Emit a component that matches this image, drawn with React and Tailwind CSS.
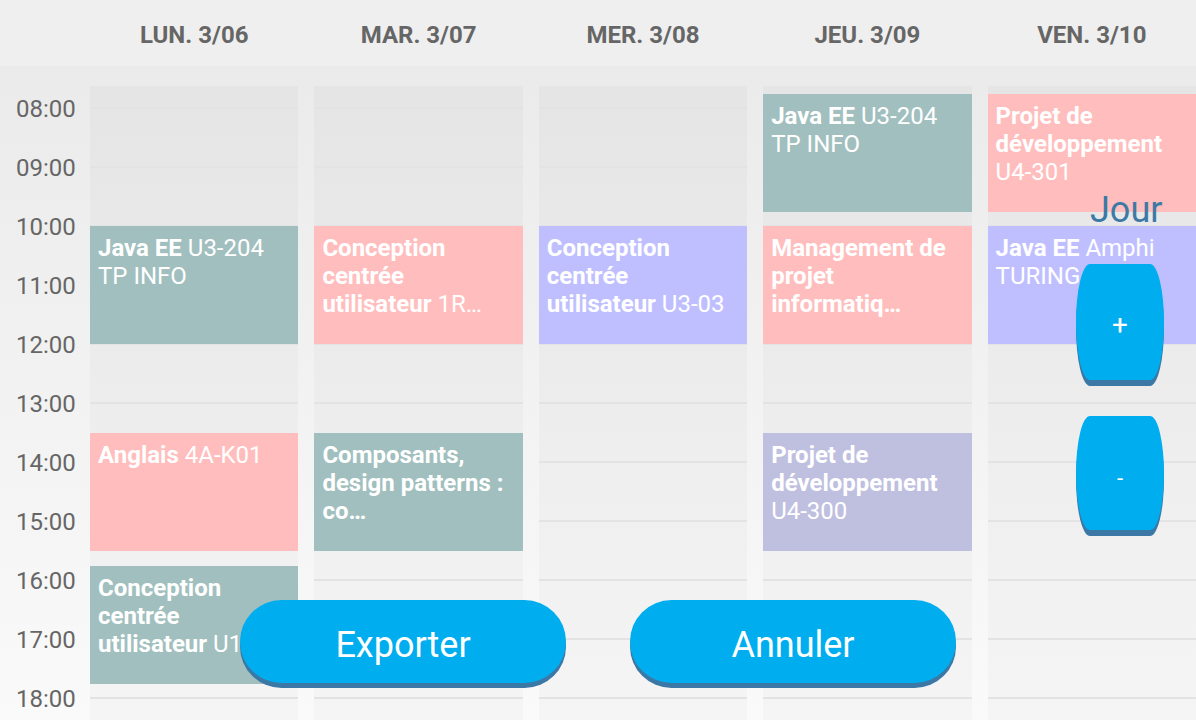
import React from 'react';

const days = ['LUN. 3/06', 'MAR. 3/07', 'MER. 3/08', 'JEU. 3/09', 'VEN. 3/10'];
const hours = ['08:00', '09:00', '10:00', '11:00', '12:00', '13:00', '14:00', '15:00', '16:00', '17:00', '18:00'];

// top = px from column top (column starts 86px down the page), 59px per hour
const events = [
  [
    { top: 140, bg: 'bg-[#a1bfbe]', lines: [[['Java EE', true], [' U3-204', false]], [['TP INFO', false]]] },
    { top: 347, bg: 'bg-[#ffbdbd]', lines: [[['Anglais', true], [' 4A-K01', false]]] },
    { top: 480, bg: 'bg-[#a1bfbe]', lines: [[['Conception', true]], [['centrée', true]], [['utilisateur', true], [' U1-204', false]]] },
  ],
  [
    { top: 140, bg: 'bg-[#ffbdbd]', lines: [[['Conception', true]], [['centrée', true]], [['utilisateur', true], [' 1R…', false]]] },
    { top: 347, bg: 'bg-[#a1bfbe]', lines: [[['Composants,', true]], [['design patterns :', true]], [['co…', true]]] },
  ],
  [
    { top: 140, bg: 'bg-[#bfbfff]', lines: [[['Conception', true]], [['centrée', true]], [['utilisateur', true], [' U3-03', false]]] },
  ],
  [
    { top: 8, bg: 'bg-[#a1bfbe]', lines: [[['Java EE', true], [' U3-204', false]], [['TP INFO', false]]] },
    { top: 140, bg: 'bg-[#ffbdbd]', lines: [[['Management de', true]], [['projet', true]], [['informatiq…', true]]] },
    { top: 347, bg: 'bg-[#bfbfdf]', lines: [[['Projet de', true]], [['développement', true]], [['U4-300', false]]] },
  ],
  [
    { top: 8, bg: 'bg-[#ffbdbd]', lines: [[['Projet de', true]], [['développement', true]], [['U4-301', false]]] },
    { top: 140, bg: 'bg-[#bfbfff]', lines: [[['Java EE', true], [' Amphi', false]], [['TURING', false]]] },
  ],
];

function Event({ ev }) {
  return (
    <div className={`absolute left-0 right-0 h-[118px] overflow-hidden px-[8px] pt-[8px] text-[24px] leading-[28px] text-white ${ev.bg}`}
      style={{ top: ev.top }}>
      {ev.lines.map((line, i) => (
        <div key={i} className="whitespace-nowrap">
          {line.map(([t, b], j) => (
            <span key={j} className={b ? 'font-bold' : 'font-normal'}>{t}</span>
          ))}
        </div>
      ))}
    </div>
  );
}

export default function App() {
  return (
    <div className="relative w-[1196px] h-[720px] overflow-hidden bg-gradient-to-b from-[#e9e9e9] to-[#fafafa]"
      style={{ fontFamily: 'Roboto, "Noto Sans", sans-serif' }}>
      {/* header */}
      <div className="flex h-[66px] bg-[#efefef]">
        <div className="w-[90px] shrink-0" />
        <div className="grid w-[1106px] grid-cols-5 gap-4">
          {days.map(d => (
            <div key={d} className="flex items-center justify-center pt-[4px] text-[24px] font-bold text-[#666666]">{d}</div>
          ))}
        </div>
      </div>

      {/* body */}
      <div className="flex h-[654px]">
        <div className="flex w-[90px] shrink-0 flex-col pt-[13px]">
          {hours.map(h => (
            <div key={h} className="flex h-[59px] shrink-0 items-center pl-[16px] text-[24px] text-[#666666]">{h}</div>
          ))}
        </div>
        <div className="grid w-[1106px] grid-cols-5 gap-4 pt-[20px]">
          {events.map((col, i) => (
            <div key={i} className="relative h-[634px] bg-gradient-to-b from-[#e5e5e5] to-[#f5f5f5]">
              <div className="flex flex-col pt-[21px]">
                {hours.map(h => (
                  <div key={h} className="h-[59px] shrink-0 border-t-2 border-[#e3e3e3]" />
                ))}
              </div>
              {col.map((ev, j) => <Event key={j} ev={ev} />)}
            </div>
          ))}
        </div>
      </div>

      {/* overlays */}
      <div className="absolute left-[1090px] top-[188px] text-[36px] leading-[44px] text-[#3c7aa6]">Jour</div>
      <button className="absolute left-[1076px] top-[264px] flex h-[116px] w-[88px] items-center justify-center rounded-[14px/50%] bg-[#00aeef] pt-[6px] text-[28px] text-white shadow-[0_6px_0_#3b78a6]">+</button>
      <button className="absolute left-[1076px] top-[416px] flex h-[114px] w-[88px] items-center justify-center rounded-[14px/50%] bg-[#00aeef] pt-[10px] text-[22px] text-white shadow-[0_6px_0_#3b78a6]">-</button>

      <button className="absolute left-[240px] top-[600px] flex h-[83px] w-[326px] items-center justify-center rounded-full bg-[#00aeef] pt-[6px] text-[36px] text-white shadow-[0_5px_0_#3b78a6]">Exporter</button>
      <button className="absolute left-[630px] top-[600px] flex h-[83px] w-[326px] items-center justify-center rounded-full bg-[#00aeef] pt-[6px] text-[36px] text-white shadow-[0_5px_0_#3b78a6]">Annuler</button>
    </div>
  );
}
